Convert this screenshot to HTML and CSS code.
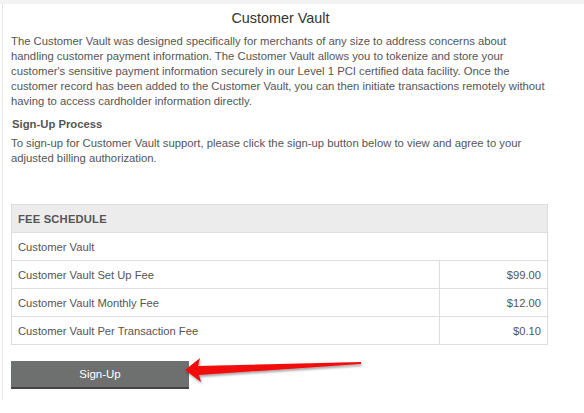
FILE: index.html
```html
<!DOCTYPE html>
<html>
<head>
<meta charset="utf-8">
<link rel="stylesheet" href="styles.css">
</head>
<body>
<div class="topband"></div>
<div class="page">
  <h1 class="title">Customer Vault</h1>
  <p class="intro">The Customer Vault was designed specifically for merchants of any size to address concerns about handling customer payment information. The Customer Vault allows you to tokenize and store your customer's sensitive payment information securely in our Level 1 PCI certified data facility. Once the customer record has been added to the Customer Vault, you can then initiate transactions remotely without having to access cardholder information directly.</p>
  <h2 class="subhead">Sign-Up Process</h2>
  <p class="intro second">To sign-up for Customer Vault support, please click the sign-up button below to view and agree to your adjusted billing authorization.</p>
  <table class="fees">
    <tr><th colspan="2">FEE SCHEDULE</th></tr>
    <tr><td colspan="2">Customer Vault</td></tr>
    <tr><td>Customer Vault Set Up Fee</td><td class="amt">$99.00</td></tr>
    <tr><td>Customer Vault Monthly Fee</td><td class="amt">$12.00</td></tr>
    <tr><td>Customer Vault Per Transaction Fee</td><td class="amt">$0.10</td></tr>
  </table>
  <div class="actions">
    <button class="signup">Sign-Up</button>
    <svg class="arrow" width="180" height="30" viewBox="0 0 180 30">
      <defs>
        <filter id="sh" x="-10%" y="-50%" width="120%" height="200%">
          <feDropShadow dx="1" dy="2" stdDeviation="1.2" flood-color="#000" flood-opacity="0.35"/>
        </filter>
      </defs>
      <path d="M0 13 L15 1 L13 9 L176 5 L176 7 L14 18 L16 25 Z" fill="#f20a0a" filter="url(#sh)"/>
    </svg>
  </div>
</div>
</body>
</html>
```
FILE: styles.css
```css
html, body {
  margin: 0;
  padding: 0;
  background: #ffffff;
}
body {
  font-family: "Liberation Sans", Arial, sans-serif;
  color: #555555;
  width: 584px;
  height: 413px;
  overflow: hidden;
}
.topband {
  height: 4px;
  background: #f3f3f3;
}
.page {
  border-left: 1px solid #e6e6e6;
  margin-left: 2px;
  padding: 0 36px 10px 8px;
  height: 386px;
}
.title {
  margin: 0;
  padding-top: 5px;
  font-size: 14.4px;
  font-weight: normal;
  color: #333333;
  text-align: center;
  line-height: 18px;
  padding-left: 2px;
}
.intro {
  margin: 7px 0 0 0;
  font-size: 11.3px;
  line-height: 15px;
  color: #555555;
}
.intro.second {
  margin-top: 4px;
}
.subhead {
  margin: 8px 0 0 0;
  font-size: 11.3px;
  line-height: 15px;
  font-weight: bold;
  color: #555555;
  padding-left: 1px;
}
.fees {
  margin-top: 38px;
  width: 537px;
  border-collapse: collapse;
  font-size: 11.2px;
  color: #555555;
}
.fees th, .fees td {
  border: 1px solid #dddddd;
  height: 27px;
  padding: 0 6px;
  text-align: left;
}
.fees th {
  background: #ececec;
  font-weight: bold;
  color: #555555;
  letter-spacing: 0.2px;
}
.fees td.amt {
  width: 95px;
  text-align: right;
}
.actions {
  display: flex;
  align-items: center;
  margin-top: 16px;
}
.signup {
  width: 178px;
  height: 28px;
  background: #6e6f6f;
  border: none;
  border-bottom: 2px solid #444444;
  color: #ffffff;
  font-family: "Liberation Sans", Arial, sans-serif;
  font-size: 11.5px;
  padding: 0;
}
.arrow {
  margin-left: -4px;
  margin-top: -6px;
}
```
